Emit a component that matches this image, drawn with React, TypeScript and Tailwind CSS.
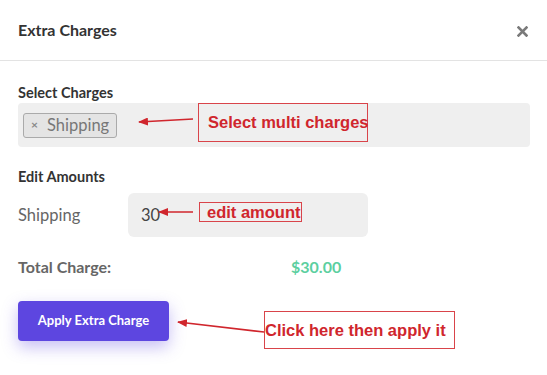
import React from 'react';

const Arrows: React.FC = () => (
  <svg className="absolute inset-0 pointer-events-none" width="547" height="375" viewBox="0 0 547 375">
    <defs>
      <marker id="head" markerWidth="10" markerHeight="8" refX="9" refY="4" orient="auto" markerUnits="userSpaceOnUse">
        <path d="M0 0 L10 4 L0 8 Z" fill="#d0262d" />
      </marker>
    </defs>
    <line x1="193" y1="119" x2="139" y2="122" stroke="#d0262d" strokeWidth="1.6" markerEnd="url(#head)" />
    <line x1="193" y1="212" x2="159" y2="212" stroke="#d0262d" strokeWidth="1.6" markerEnd="url(#head)" />
    <line x1="264" y1="332" x2="178" y2="322" stroke="#d0262d" strokeWidth="1.6" markerEnd="url(#head)" />
  </svg>
);

export default function App() {
  return (
    <div className="relative w-[547px] h-[375px] bg-white overflow-hidden font-['Lato',sans-serif] text-[#333]">
      {/* Header */}
      <div className="h-[61px] px-[18px] flex items-center justify-between border-b border-[#e3e3e3]">
        <h1 className="text-[16px] font-bold text-[#333]">Extra Charges</h1>
        <svg width="11" height="11" viewBox="0 0 11 11" className="mr-[1px] mt-[3px]">
          <path d="M1.5 1.5 L9.5 9.5 M9.5 1.5 L1.5 9.5" stroke="#7a7a7a" strokeWidth="2.6" strokeLinecap="square" />
        </svg>
      </div>

      {/* Body */}
      <div className="px-[18px]">
        <div className="mt-[22px] text-[14.5px] font-bold leading-[20px] text-[#333]">Select Charges</div>
        <div className="w-[512px] h-[44px] rounded-[4px] bg-[#efefef] flex items-center px-[5px]">
          <span className="h-[25px] w-[94px] flex items-center gap-[9px] pl-[7px] rounded-[3px] border border-[#aaa] bg-[#e4e4e4] text-[16.5px] text-[#777]">
            <span className="text-[12px] font-bold text-[#888]">×</span>
            Shipping
          </span>
        </div>

        <div className="mt-[20px] text-[14.5px] font-bold leading-[20px] text-[#333]">Edit Amounts</div>
        <div className="mt-[6px] flex items-center">
          <span className="w-[110px] text-[16.5px] text-[#666]">Shipping</span>
          <div className="w-[240px] h-[44px] rounded-[6px] bg-[#efefef] flex items-center pl-[13px] text-[16.5px] text-[#444]">30</div>
        </div>

        <div className="mt-[20px] flex items-center leading-[20px]">
          <span className="w-[273px] text-[16px] font-bold text-[#666]">Total Charge:</span>
          <span className="text-[16px] font-bold text-[#5ccfa0]">$30.00</span>
        </div>

        <button className="mt-[24px] w-[151px] h-[40px] rounded-[4px] bg-[#5d46e0] text-white text-[13px] font-bold shadow-[0_6px_16px_rgba(93,70,224,0.35)]">
          Apply Extra Charge
        </button>
      </div>

      {/* Annotations */}
      <div className="absolute left-[198px] top-[103px] w-[170px] h-[39px] border-[1.5px] border-[#d9444a] flex items-center pl-[9px] font-['Liberation_Sans',sans-serif] font-bold text-[16.5px] text-[#d0262d] whitespace-nowrap">
        Select multi charges
      </div>
      <div className="absolute left-[199px] top-[202px] w-[103px] h-[20px] border-[1.5px] border-[#d9444a] flex items-center pl-[7px] font-['Liberation_Sans',sans-serif] font-bold text-[16.5px] text-[#d0262d] whitespace-nowrap">
        edit amount
      </div>
      <div className="absolute left-[264px] top-[311px] w-[191px] h-[38px] border-[1.5px] border-[#d9444a] flex items-center font-['Liberation_Sans',sans-serif] font-bold text-[16.5px] text-[#d0262d] whitespace-nowrap">
        Click here then apply it
      </div>
      <Arrows />
    </div>
  );
}
